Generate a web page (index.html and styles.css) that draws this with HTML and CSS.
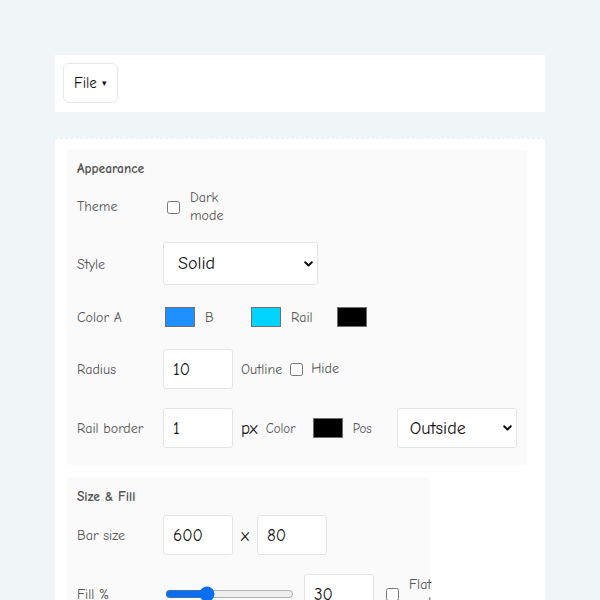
FILE: index.html
```html
<!DOCTYPE html>
<html lang="en">
<head>
<meta charset="utf-8">
<title>Bar editor</title>
<link rel="stylesheet" href="styles.css">
</head>
<body>
  <div class="toolbar">
    <button class="menu-btn" type="button">File <span class="caret">▾</span></button>
  </div>

  <div class="panel">
    <section class="group">
      <h3 class="group-title">Appearance</h3>

      <div class="row row-theme">
        <span class="label">Theme</span>
        <label class="check"><input type="checkbox"><span class="check-text">Dark mode</span></label>
      </div>

      <div class="row">
        <span class="label">Style</span>
        <select class="select select-style"><option>Solid</option></select>
      </div>

      <div class="row">
        <span class="label">Color A</span>
        <span class="swatch"><span class="swatch-fill" style="background:#1e8fff"></span></span>
        <span class="mini">B</span>
        <span class="swatch"><span class="swatch-fill" style="background:#00d4ff"></span></span>
        <span class="mini">Rail</span>
        <span class="swatch"><span class="swatch-fill" style="background:#000000"></span></span>
      </div>

      <div class="row">
        <span class="label">Radius</span>
        <input class="num" type="text" value="10">
        <span class="mini">Outline</span>
        <label class="check check-inline"><input type="checkbox"><span>Hide</span></label>
      </div>

      <div class="row">
        <span class="label">Rail border</span>
        <input class="num" type="text" value="1">
        <span class="unit">px</span>
        <span class="mini small">Color</span>
        <span class="swatch"><span class="swatch-fill" style="background:#000000"></span></span>
        <span class="mini small pos">Pos</span>
        <select class="select select-pos"><option>Outside</option></select>
      </div>
    </section>

    <section class="group group-size">
      <h3 class="group-title">Size &amp; Fill</h3>

      <div class="row">
        <span class="label">Bar size</span>
        <input class="num" type="text" value="600">
        <span class="unit times">x</span>
        <input class="num" type="text" value="80">
      </div>

      <div class="row">
        <span class="label">Fill %</span>
        <input class="range" type="range" min="0" max="100" value="30">
        <input class="num" type="text" value="30">
        <label class="check"><input type="checkbox"><span class="check-text">Flat ends</span></label>
      </div>
    </section>
  </div>
</body>
</html>
```

FILE: styles.css
```css
html, body {
  margin: 0;
}

body {
  background: #f0f5f8;
  padding: 55px;
  font-family: "Comic Sans MS", "Comic Neue", "Noto Sans", sans-serif;
  color: #222;
  font-size: 14px;
}

/* top menu strip */
.toolbar {
  background: #ffffff;
  padding: 8px 8px 9px;
}

.menu-btn {
  height: 40px;
  padding: 0 10px;
  background: #fff;
  border: 1px solid #e6e9ec;
  border-radius: 6px;
  font: inherit;
  font-size: 15px;
  color: #111;
}

.menu-btn .caret {
  font-size: 9px;
  vertical-align: 2px;
}

/* settings panel */
.panel {
  margin-top: 26px;
  background: #ffffff;
  border-top: 1px dashed #ebeff3;
  padding: 11px 12px 12px;
  height: 500px;
}

.group {
  width: fit-content;
  background: #fafafa;
  padding: 10px 10px 17px;
}

.group-size {
  margin-top: 13px;
  width: 343px;
}

.group-title {
  margin: 0 0 11px;
  font-size: 13.5px;
  line-height: 18px;
  font-weight: 600;
  color: #555;
}

.group-size .group-title {
  margin-bottom: 9px;
}

.row {
  display: flex;
  align-items: center;
  gap: 8px;
  min-height: 26px;
  margin-bottom: 19px;
}

.row > * {
  flex-shrink: 0;
}

.row-theme {
  margin-bottom: 17px;
}

.row:last-child {
  margin-bottom: 0;
}

.label {
  width: 78px;
  padding-top: 2px;
  font-size: 14px;
  line-height: 18px;
  color: #555;
}

.row-theme .label {
  padding-top: 0;
}

.check {
  display: inline-flex;
  align-items: center;
  gap: 10px;
  font-size: 14px;
  line-height: 18px;
  color: #555;
}

.check input {
  width: 13px;
  height: 13px;
  margin: 3px 0 3px 4px;
}

.check-text {
  width: min-content;
}

.check-inline {
  gap: 8px;
}

.check-inline input {
  margin-left: 0;
}

.select {
  appearance: none;
  -webkit-appearance: none;
  background: #fff url("data:image/svg+xml,%3Csvg xmlns='http://www.w3.org/2000/svg' width='9' height='6' viewBox='0 0 9 6'%3E%3Cpath d='M1.2 1.2l3.3 3.3 3.3-3.3' fill='none' stroke='%23111' stroke-width='2' stroke-linecap='round' stroke-linejoin='round'/%3E%3C/svg%3E") no-repeat right 4px center;
  border: 1px solid #e4e4e4;
  border-radius: 3px;
  font: inherit;
  font-size: 18px;
  color: #111;
}

.select-style {
  width: 155px;
  height: 43px;
  padding: 0 14px;
}

.select-pos {
  width: 120px;
  height: 40px;
  padding: 0 12px;
}

.swatch {
  display: inline-block;
  width: 34px;
  height: 24px;
  padding: 2px;
  box-sizing: border-box;
}

.swatch-fill {
  display: block;
  width: 100%;
  height: 100%;
  border: 1px solid #6f6f6f;
  box-sizing: border-box;
}

.mini {
  min-width: 36px;
  font-size: 14px;
  color: #555;
}

.mini.small {
  min-width: 37px;
  font-size: 13px;
}

.mini.pos {
  min-width: 36px;
}

.num {
  width: 70px;
  height: 40px;
  box-sizing: border-box;
  border: 1px solid #e4e4e4;
  border-radius: 3px;
  padding: 0 9px;
  font: inherit;
  font-size: 17px;
  color: #111;
  background: #fff;
}

.unit {
  font-size: 17px;
  color: #111;
}

.range {
  width: 129px;
  margin: 2px;
  accent-color: #0b6ef0;
}
```
